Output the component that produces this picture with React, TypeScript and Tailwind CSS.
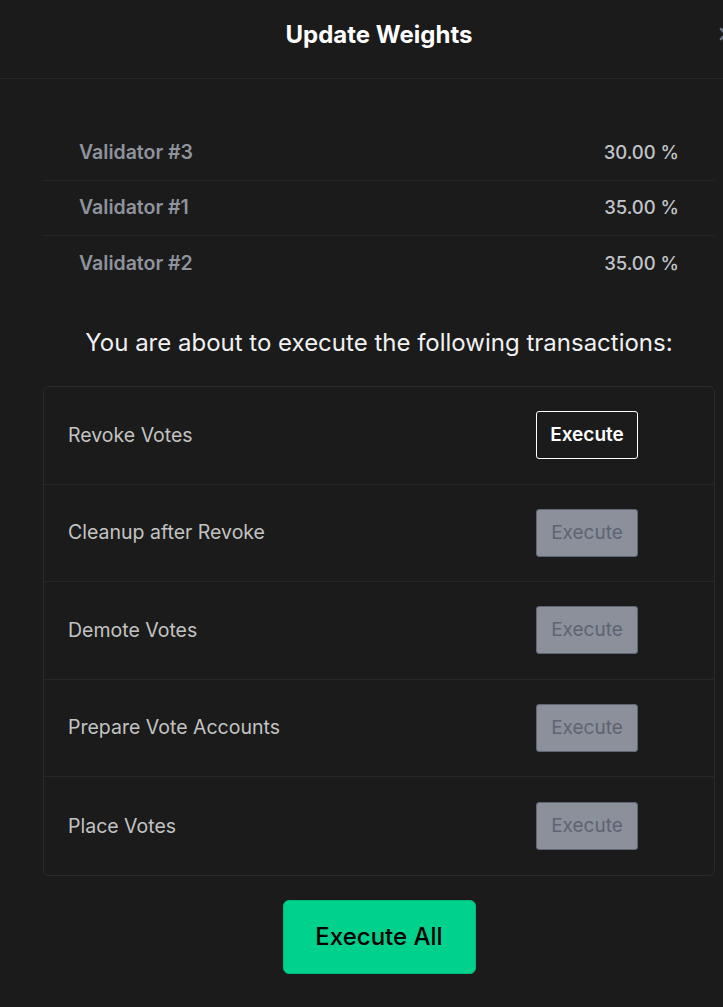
import { X } from 'lucide-react';

const weights = [
  { name: 'Validator #3', value: '30.00 %' },
  { name: 'Validator #1', value: '35.00 %' },
  { name: 'Validator #2', value: '35.00 %' },
];

const steps = ['Revoke Votes', 'Cleanup after Revoke', 'Demote Votes', 'Prepare Vote Accounts', 'Place Votes'];

export default function App() {
  return (
    <div className="h-[1007px] w-[723px] overflow-hidden bg-[#1b1b1b]">
      {/* modal is wider than the viewport, right edge is clipped */}
      <div className="w-[758px]" style={{ fontFamily: 'Inter, "Noto Sans", sans-serif' }}>
        {/* Header */}
        <div className="relative flex h-[79px] items-start justify-center border-b border-[#262626] pt-[18px]">
          <h2 className="text-[24px] font-bold leading-[34px] text-white">Update Weights</h2>
          <X className="absolute left-[716px] top-[24px] h-5 w-5 text-[#6b7280]" strokeWidth={3} />
        </div>

        {/* Weights table */}
        <div className="mx-[43px] mt-[47px]">
          {weights.map((w, i) => (
            <div
              key={w.name}
              className={`flex h-[55px] items-center justify-between px-[36px] font-semibold ${
                i < weights.length - 1 ? 'border-b border-[#262626]' : ''
              }`}
            >
              <span className="text-[19.5px] text-[#8e939c]">{w.name}</span>
              <span className="text-[18.5px] font-medium text-[#c2c4c9]">{w.value}</span>
            </div>
          ))}
        </div>

        <p className="mt-[36px] text-center text-[24px] leading-[32px] text-[#f1f1f1]">
          You are about to execute the following transactions:
        </p>

        {/* Transactions */}
        <div className="mx-[43px] mt-[27px] rounded-md border border-[#2a2a2a]">
          {steps.map((s, i) => (
            <div
              key={s}
              className={`flex h-[97.6px] items-center justify-between pl-[24px] pr-[76px] ${
                i < steps.length - 1 ? 'border-b border-[#262626]' : ''
              }`}
            >
              <span className="text-[19.5px] text-[#c3c3c3]">{s}</span>
              {i === 0 ? (
                <button className="h-[48px] w-[102px] rounded-[3px] border border-white text-[19px] font-semibold text-white">
                  Execute
                </button>
              ) : (
                <button
                  disabled
                  className="h-[48px] w-[102px] rounded-[3px] border border-[#5f6676] bg-[#8b909b] text-[19px] text-[#5e6472]"
                >
                  Execute
                </button>
              )}
            </div>
          ))}
        </div>

        <div className="mt-[24px] flex justify-center">
          <button className="h-[74px] w-[193px] rounded-md border border-[#00b97c] bg-[#00d18d] text-[24px] font-medium text-black">
            Execute All
          </button>
        </div>
      </div>
    </div>
  );
}
